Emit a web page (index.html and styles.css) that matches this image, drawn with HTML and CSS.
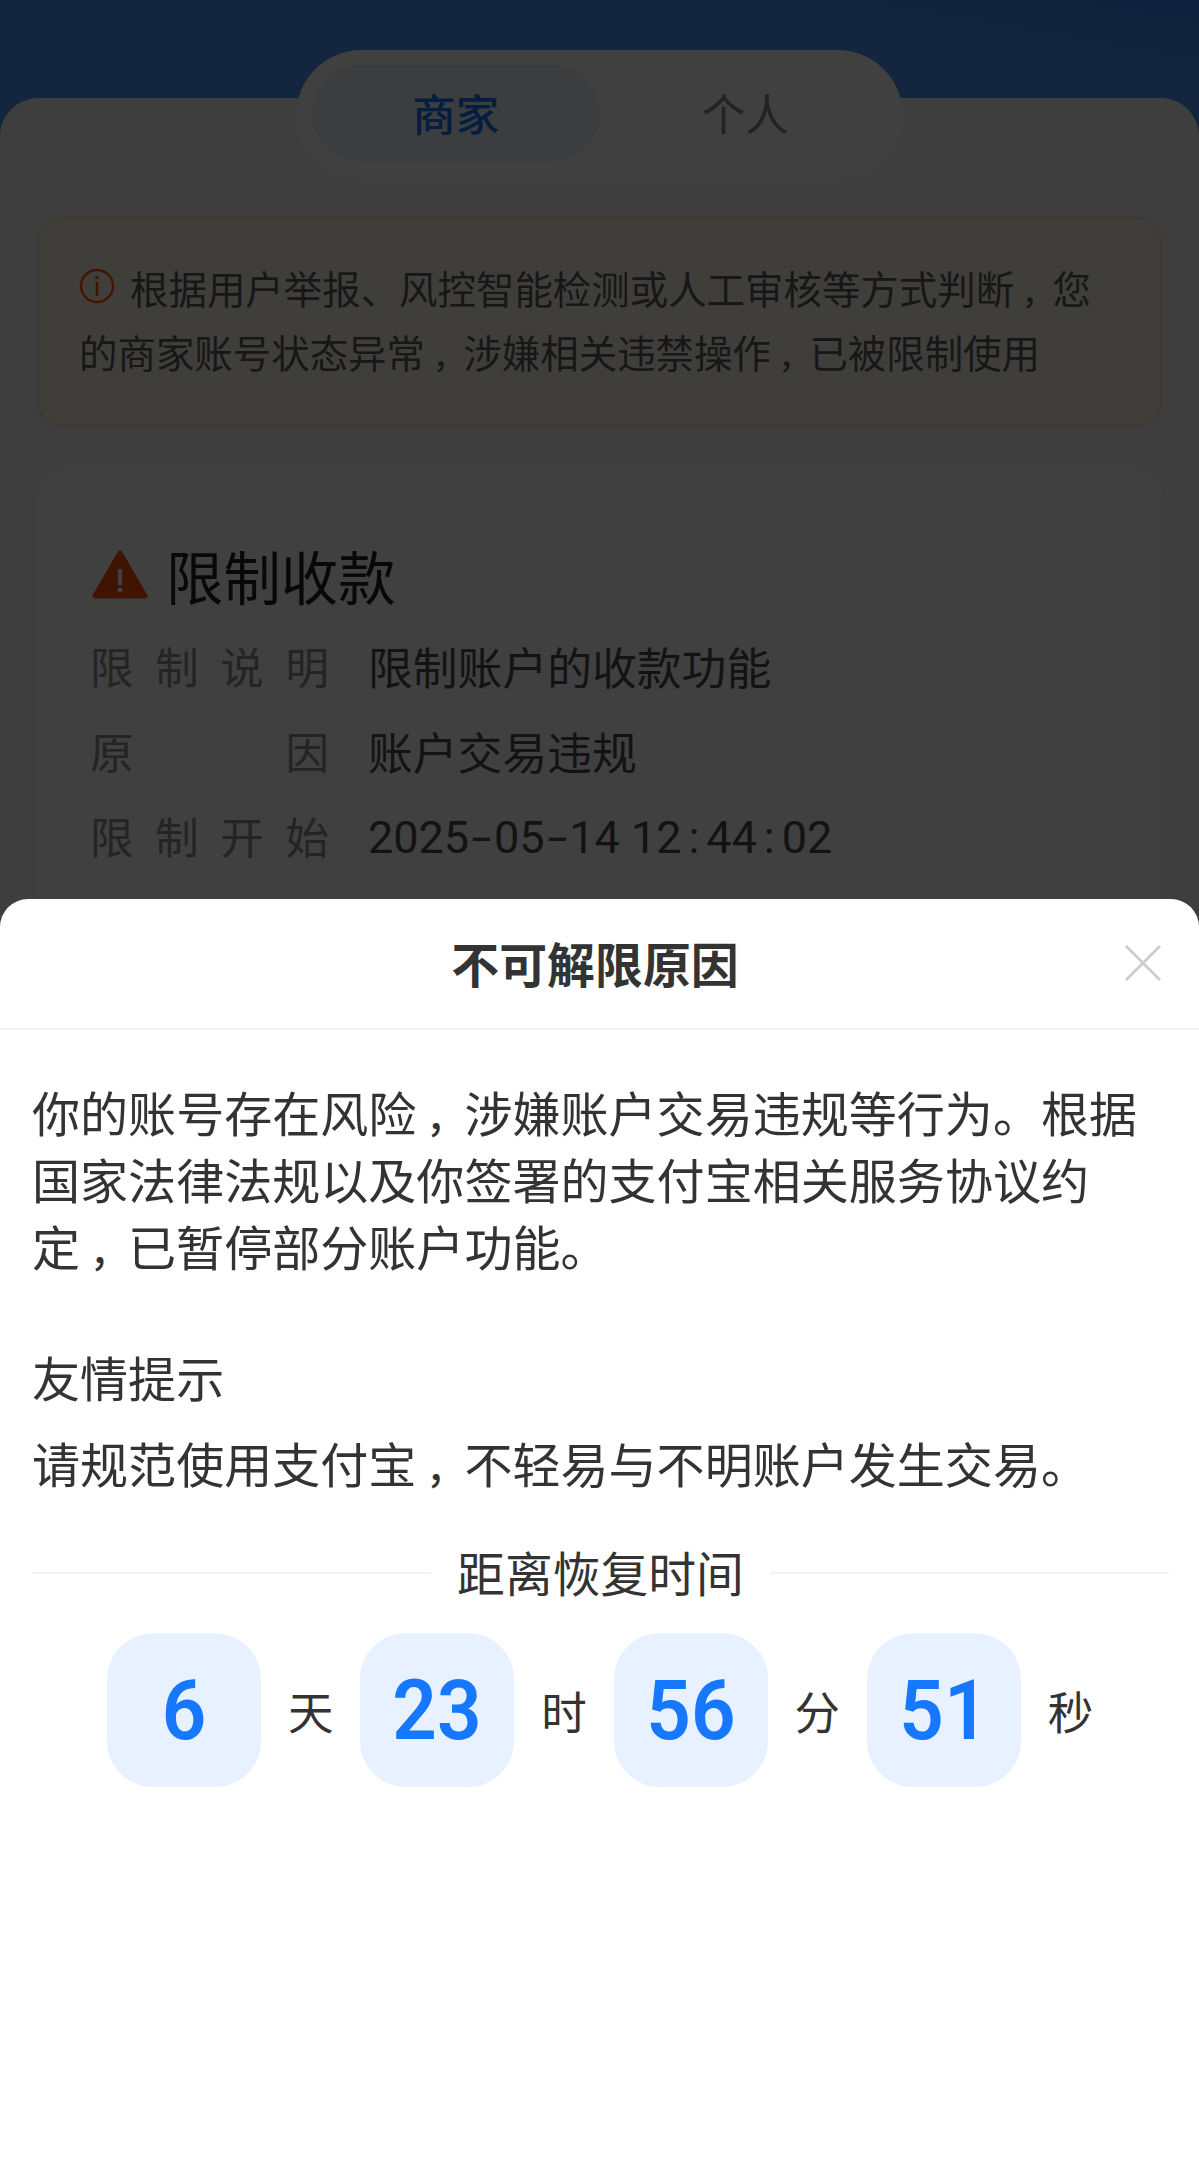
FILE: index.html
```html
<!DOCTYPE html>
<html lang="zh-CN">
<head>
    <meta charset="UTF-8">
    <meta name="viewport" content="width=device-width, initial-scale=1.0">
    <title>不可解限原因</title>
    <link rel="stylesheet" href="styles.css">
</head>
<body>
    <div class="page">
        <div class="panel">
            <div class="tabs">
                <div class="tab active">商家</div>
                <div class="tab">个人</div>
            </div>

            <div class="notice">
                <svg class="info-icon" viewBox="0 0 36 36">
                    <circle cx="18" cy="18" r="16" fill="none" stroke="#ff5a0a" stroke-width="2.4"/>
                    <path d="M18 14v14" stroke="#ff5a0a" stroke-width="2.6"/>
                    <circle cx="18" cy="9.5" r="1.8" fill="#ff5a0a"/>
                </svg>根据用户举报、风控智能检测或人工审核等方式判断<span class="comma">，</span>您<br>的商家账号状态异常<span class="comma">，</span>涉嫌相关违禁操作<span class="comma">，</span>已被限制使用
            </div>

            <div class="card">
                <div class="card-title">
                    <svg class="warn-icon" viewBox="0 0 56 50">
                        <path d="M28 3L53 46H3Z" fill="#ff5000" stroke="#ff5000" stroke-width="5" stroke-linejoin="round"/>
                        <path d="M28 19v16" stroke="#fff" stroke-width="4.4"/>
                        <circle cx="28" cy="40" r="2.5" fill="#fff"/>
                    </svg>
                    <span>限制收款</span>
                </div>
                <div class="row">
                    <div class="label"><span>限</span><span>制</span><span>说</span><span>明</span></div>
                    <div class="value">限制账户的收款功能</div>
                </div>
                <div class="row">
                    <div class="label"><span>原</span><span>因</span></div>
                    <div class="value">账户交易违规</div>
                </div>
                <div class="row">
                    <div class="label"><span>限</span><span>制</span><span>开</span><span>始</span></div>
                    <div class="value date">2025<i class="dash">-</i>05<i class="dash">-</i>14 12<i>:</i>44<i>:</i>02</div>
                </div>
            </div>
        </div>
    </div>

    <div class="mask"></div>

    <div class="sheet">
        <div class="sheet-header">
            <h2>不可解限原因</h2>
            <svg class="close" viewBox="0 0 36 36">
                <path d="M1 1L35 35M35 1L1 35" stroke="#ccc" stroke-width="2.8"/>
            </svg>
        </div>
        <div class="sheet-body">
            <p class="reason">你的账号存在风险<span class="comma">，</span>涉嫌账户交易违规等行为。根据<br>国家法律法规以及你签署的支付宝相关服务协议约<br>定<span class="comma">，</span>已暂停部分账户功能。</p>
            <p class="tip-title">友情提示</p>
            <p class="tip">请规范使用支付宝<span class="comma">，</span>不轻易与不明账户发生交易。</p>
            <div class="divider"><span>距离恢复时间</span></div>
            <div class="countdown">
                <div class="num"><span>6</span></div><div class="unit">天</div>
                <div class="num"><span>23</span></div><div class="unit">时</div>
                <div class="num"><span>56</span></div><div class="unit">分</div>
                <div class="num"><span>51</span></div><div class="unit">秒</div>
            </div>
        </div>
    </div>
</body>
</html>
```

FILE: styles.css
```css
* {
    box-sizing: border-box;
    margin: 0;
    padding: 0;
}
body {
    position: relative;
    height: 2178px;
    overflow: hidden;
    font-family: "Noto Sans CJK SC", sans-serif;
    color: #333;
    white-space: nowrap;
}
.page {
    height: 1000px;
    padding-top: 98px;
    background: linear-gradient(190deg, #3c84f0 0, #4c98f6 90px, #5097f6 200px);
}
.panel {
    height: 902px;
    padding: 0 37px;
    background: #f6f6f6;
    border-radius: 38px 38px 0 0;
}
.panel::before {
    content: "";
    display: table;
}

/* tabs */
.tabs {
    display: flex;
    width: 607px;
    height: 131px;
    margin: -48px auto 0;
    padding: 15px 16px;
    border-radius: 66px;
    background: #fdfdfd;
}
.tab {
    width: 288px;
    height: 97px;
    border-radius: 49px;
    font-size: 43.5px;
    line-height: 96px;
    text-align: center;
    color: #888;
}
.tab:last-child {
    padding-left: 4px;
}
.tab.active {
    background: #f0f2fc;
    color: #1677ff;
    font-weight: 500;
}

/* notice */
.notice {
    height: 210px;
    margin-top: 36px;
    padding: 36px 40px;
    border: 2px solid #ffe4cc;
    border-radius: 26px;
    background: #fcf8ec;
    font-size: 38.45px;
    line-height: 64px;
    color: #5c5c5c;
}
.info-icon {
    width: 36px;
    height: 36px;
    margin-right: 15px;
}
.comma {
    padding-left: 0.25em;
    font-size: 0.8em;
    font-weight: 500;
    line-height: 1;
}

/* card */
.card {
    height: 500px;
    margin-top: 40px;
    padding: 64px 53px;
    border-radius: 32px;
    background: #fdfdfd;
}
.card-title {
    display: flex;
    align-items: center;
    height: 93px;
    font-size: 57.4px;
    color: #222;
}
.card-title span {
    padding-bottom: 5px;
}
.warn-icon {
    width: 56px;
    height: 50px;
    margin: 0 18px 6px 2px;
}
.row {
    display: flex;
    height: 84.9px;
    line-height: 84.9px;
}
.label {
    display: flex;
    justify-content: space-between;
    width: 239px;
    margin-right: 39px;
    font-size: 43.5px;
    color: #8f8f8f;
}
.value {
    font-size: 44.8px;
    color: #4c4c4c;
}
.date {
    padding-top: 2px;
    font-family: Roboto, sans-serif;
    font-size: 45px;
}
.date i {
    display: inline-block;
    width: 0.55em;
    font-style: normal;
    text-align: center;
}
.date .dash {
    transform: scaleX(1.6);
}

.mask {
    position: absolute;
    inset: 0;
    background: rgba(0, 0, 0, 0.75);
}

/* bottom sheet */
.sheet {
    position: absolute;
    top: 899px;
    left: 0;
    right: 0;
    bottom: 0;
    border-radius: 28px 28px 0 0;
    background: #fff;
}
.sheet-header {
    display: flex;
    align-items: center;
    height: 131px;
    padding: 0 38px 2px 65px;
    border-bottom: 2px solid #f3f3f3;
}
.sheet-header h2 {
    flex: 1;
    font-size: 47.9px;
    line-height: 127px;
    text-align: center;
    font-weight: 700;
}
.close {
    width: 36px;
    height: 36px;
}
.sheet-body {
    padding: 48px 30px 0 32px;
    font-size: 48.05px;
}
.reason {
    line-height: 67px;
}
.tip-title {
    margin-top: 64px;
    line-height: 67px;
}
.tip {
    margin-top: 19px;
    line-height: 67px;
}
.divider {
    display: flex;
    align-items: center;
    gap: 26px;
    height: 70px;
    margin-top: 42px;
    font-size: 47.8px;
}
.divider span {
    padding-bottom: 3px;
}
.divider::before,
.divider::after {
    content: "";
    flex: 1;
    height: 2px;
    background: #f3f3f3;
}

/* countdown */
.countdown {
    display: flex;
    align-items: center;
    margin-top: 25px;
    padding-left: 75px;
}
.num {
    width: 154px;
    height: 154px;
    border-radius: 46px;
    background: #e7f1ff;
    color: #1677ff;
    font-family: Roboto, sans-serif;
    font-size: 84px;
    font-weight: 600;
    line-height: 155px;
    text-align: center;
}
.num span {
    display: inline-block;
    transform: scaleX(0.93);
}
.unit {
    width: 99.3px;
    padding-bottom: 1px;
    font-size: 45.5px;
    text-align: center;
}
```
